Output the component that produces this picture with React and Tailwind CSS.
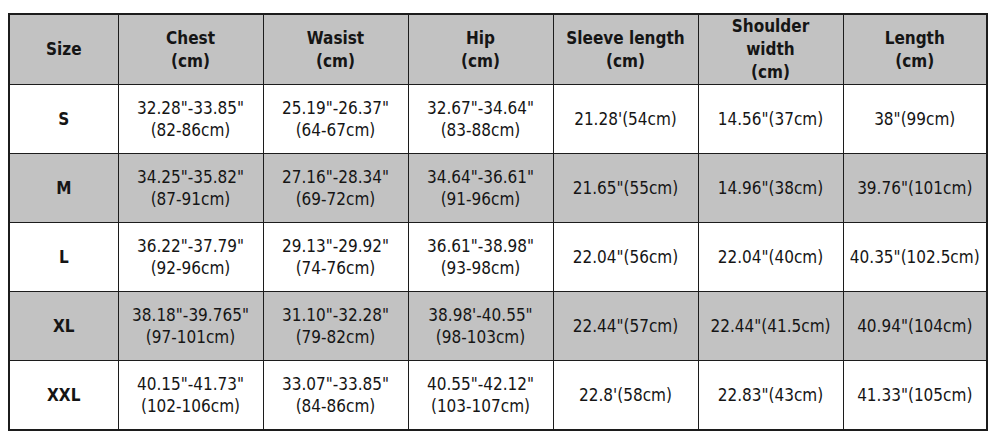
const headers = [
  ['Size'],
  ['Chest', '(cm)'],
  ['Wasist', '(cm)'],
  ['Hip', '(cm)'],
  ['Sleeve length', '(cm)'],
  ['Shoulder', 'width', '(cm)'],
  ['Length', '(cm)'],
]

const rows = [
  ['S', ['32.28"-33.85"', '(82-86cm)'], ['25.19"-26.37"', '(64-67cm)'], ['32.67"-34.64"', '(83-88cm)'], "21.28'(54cm)", '14.56"(37cm)', '38"(99cm)'],
  ['M', ['34.25"-35.82"', '(87-91cm)'], ['27.16"-28.34"', '(69-72cm)'], ['34.64"-36.61"', '(91-96cm)'], '21.65"(55cm)', '14.96"(38cm)', '39.76"(101cm)'],
  ['L', ['36.22"-37.79"', '(92-96cm)'], ['29.13"-29.92"', '(74-76cm)'], ['36.61"-38.98"', '(93-98cm)'], '22.04"(56cm)', '22.04"(40cm)', '40.35"(102.5cm)'],
  ['XL', ['38.18"-39.765"', '(97-101cm)'], ['31.10"-32.28"', '(79-82cm)'], ["38.98'-40.55\"", '(98-103cm)'], '22.44"(57cm)', '22.44"(41.5cm)', '40.94"(104cm)'],
  ['XXL', ['40.15"-41.73"', '(102-106cm)'], ['33.07"-33.85"', '(84-86cm)'], ['40.55"-42.12"', '(103-107cm)'], "22.8'(58cm)", '22.83"(43cm)', '41.33"(105cm)'],
]

const widths = ['w-[109px]', 'w-[145px]', 'w-[145px]', 'w-[145px]', 'w-[145px]', 'w-[145px]', 'w-[144px]']

const Cell = ({ value }) =>
  Array.isArray(value) ? (
    <>
      {value.map((line) => (
        <div key={line}>{line}</div>
      ))}
    </>
  ) : (
    value
  )

export default function App() {
  return (
    <div className="h-[448px] w-[1000px] bg-white pl-[8px] pt-[13px] font-['DejaVu_Sans_Condensed','DejaVu_Sans',sans-serif] text-[17px] text-[#151515]">
      <table className="w-[978px] table-fixed border-collapse border-2 border-[#1c1c1c]">
        <thead>
          <tr className="h-[69px] bg-[#c2c2c2]">
            {headers.map((h, i) => (
              <th key={i} className={`${widths[i]} border border-[#1c1c1c] p-0 text-center align-middle font-bold leading-[23px]`}>
                {h.map((line) => (
                  <div key={line}>{line}</div>
                ))}
              </th>
            ))}
          </tr>
        </thead>
        <tbody>
          {rows.map((row, r) => (
            <tr key={row[0]} className={`h-[69px] ${r % 2 === 1 ? 'bg-[#c2c2c2]' : 'bg-white'}`}>
              {row.map((value, i) => (
                <td
                  key={i}
                  className={`border border-[#1c1c1c] p-0 text-center align-middle leading-[22px] ${i === 0 ? 'font-bold' : ''}`}
                >
                  <Cell value={value} />
                </td>
              ))}
            </tr>
          ))}
        </tbody>
      </table>
    </div>
  )
}
